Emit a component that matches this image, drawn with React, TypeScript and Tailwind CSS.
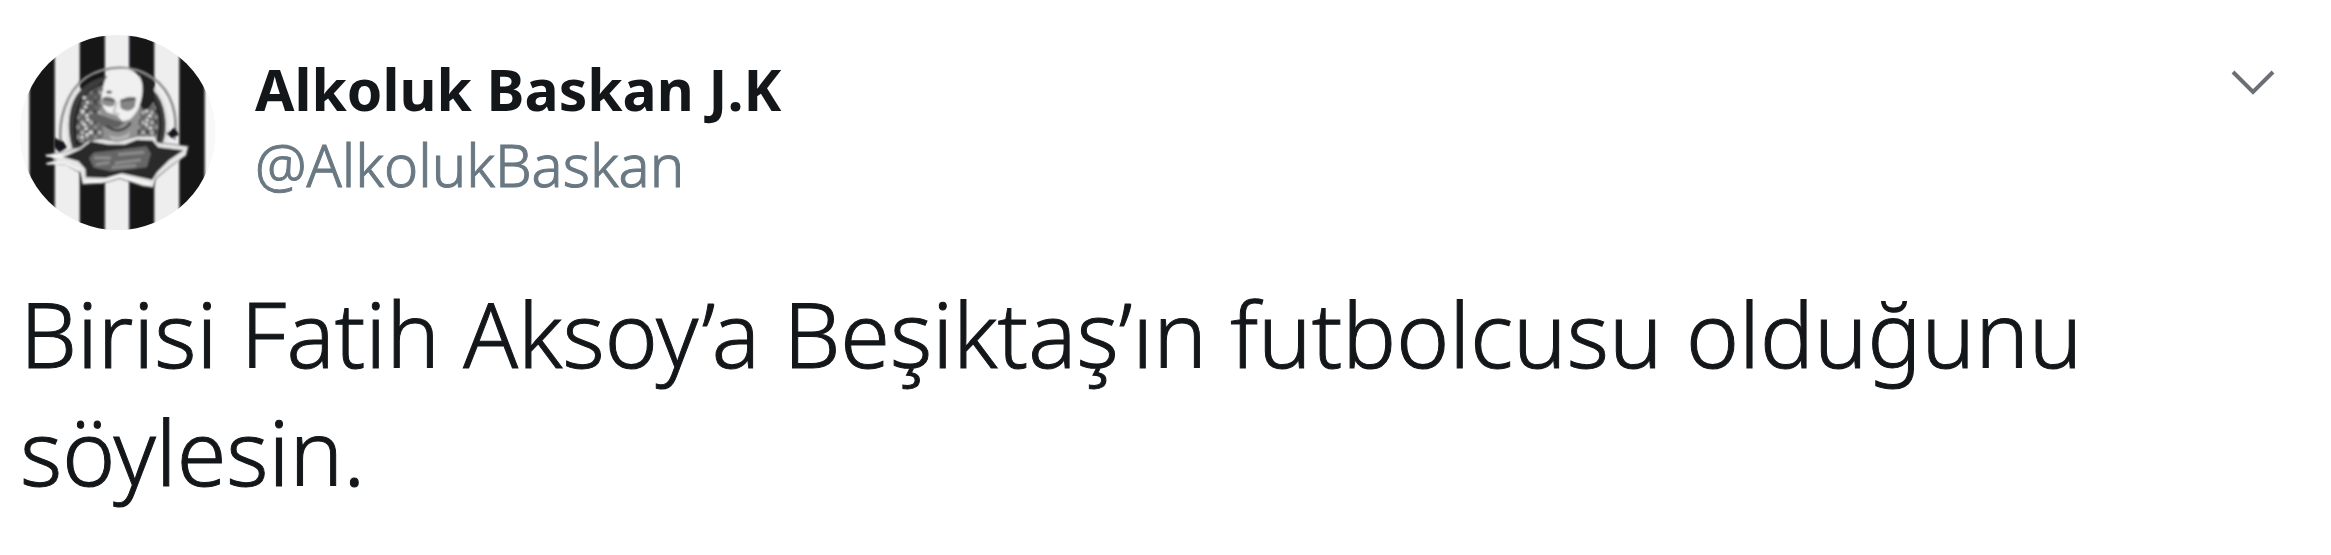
function Avatar() {
  return (
    <svg viewBox="28 46 584 584" className="size-[195px] shrink-0" role="img" aria-label="Alkoluk Baskan J.K">
      <defs>
        <clipPath id="disc">
          <circle cx="320" cy="338" r="292" />
        </clipPath>
        <filter id="soft" x="-5%" y="-5%" width="110%" height="110%">
          <feGaussianBlur stdDeviation="3" />
        </filter>
        <pattern id="grain" width="26" height="30" patternUnits="userSpaceOnUse">
          <rect width="26" height="30" fill="#686868" />
          <circle cx="7" cy="8" r="6" fill="#b4b4b4" />
          <circle cx="20" cy="22" r="5" fill="#9a9a9a" />
          <circle cx="19" cy="6" r="5" fill="#3a3a3a" />
        </pattern>
      </defs>
      <g clipPath="url(#disc)">
        <rect x="28" y="46" width="584" height="584" fill="#eeeeee" />
        <rect x="20" y="46" width="35" height="584" fill="#f8f8f9" />
        <rect x="583" y="46" width="35" height="584" fill="#f8f8f9" />
        <g fill="#141416" filter="url(#soft)">
          <rect x="56" y="30" width="76" height="620" />
          <rect x="207" y="30" width="75" height="620" />
          <rect x="355" y="30" width="75" height="620" />
          <rect x="505" y="30" width="76" height="620" />
        </g>
        <g filter="url(#soft)">
          <path d="M150 372C142 300 167 215 225 174C285 134 370 134 425 174C485 215 503 290 490 360" fill="none" stroke="#8f8f8f" strokeWidth="8" />
          <path d="M178 385C160 325 172 235 225 195C280 155 370 155 420 195C472 235 480 325 460 375Z" fill="#3d3d3d" />
          <path d="M178 385C160 325 165 245 207 205M430 205C472 245 480 325 460 375" fill="none" stroke="#e4e4e4" strokeWidth="12" />
          <path d="M198 372C185 320 195 250 235 213C280 178 370 178 408 213C448 250 455 315 440 362Z" fill="url(#grain)" stroke="#222" strokeWidth="8" />
          <path d="M388 160L430 185V245L405 275L380 250Z" fill="#222" />
          <path d="M262 190L215 215L205 260L245 280L270 250Z" fill="#444" opacity=".5" />
          <path d="M268 260L280 365C300 390 355 390 377 360L390 260Z" fill="#909090" />
          <path d="M277 208C280 165 305 148 340 148C376 148 398 174 395 214C393 244 382 282 355 300L335 304L318 286L290 278C273 262 266 238 277 208Z" fill="#f0f0f0" />
          <path d="M275 236C287 225 304 231 314 242L310 257C294 265 280 258 273 248Z" fill="#8c8c8c" />
          <path d="M327 245C338 232 360 228 376 234L372 260C362 276 341 276 329 264Z" fill="#858585" />
          <path d="M277 237L312 243M329 243L373 237" stroke="#555" strokeWidth="6" fill="none" />
          <ellipse cx="295" cy="217" rx="9" ry="5" fill="#666" />
          <path d="M318 246L309 278L326 285" stroke="#c4c4c4" strokeWidth="7" fill="none" />
          <path d="M225 288C250 273 276 290 305 298L340 307L322 323L285 324Z" fill="#606060" />
          <path d="M288 318C313 340 342 334 360 308" fill="none" stroke="#444" strokeWidth="8" />
          <path d="M294 344C313 355 340 352 358 334L350 368L306 372Z" fill="#b4b4b4" />
          <path d="M218 230L232 252L215 272L235 294L218 320L240 340M405 270L418 290L402 310L425 330M210 355L245 335M385 352L432 350" fill="none" stroke="#d8d8d8" strokeWidth="9" strokeDasharray="9 8" />
          <path d="M130 354L158 365L170 382L146 398L130 382ZM466 342L491 322L505 345L482 355Z" fill="#17171a" />
          <path d="M106 405L160 396L207 383L230 364L270 357L320 365L380 349L433 349L439 368L532 379L525 407L477 440L435 475L427 503L395 498L326 475L276 490L215 493L208 458L166 434L105 431L136 420Z" fill="#e6e6e6" stroke="#777" strokeWidth="3" />
          <path d="M158 411L208 389L240 364L292 374L342 374L378 360L425 362L442 382L518 391L474 421L439 456L424 480L387 472L333 460L285 474L225 472L224 448L203 424Z" fill="#29292b" />
          <path d="M235 414L249 398L324 390L407 379L420 402L408 442L358 448L300 454L248 443Z" fill="#666" />
          <path d="M250 414H300M322 404L400 397M255 434L296 428M312 430L390 420M303 443L376 437" stroke="#8c8c8c" strokeWidth="9" fill="none" />
          <path d="M106 408H155M108 432L162 430L205 450M220 486L276 484L325 468L418 493" stroke="#fff" strokeWidth="5" fill="none" />
        </g>
      </g>
    </svg>
  );
}

export default function App() {
  return (
    <article className="bg-white px-5 pt-[35px] pb-10 font-['Noto_Sans','Open_Sans',sans-serif] text-[#14171a]">
      <header className="flex items-start">
        <Avatar />
        <div className="ml-10 flex-1 pt-4">
          <h1 className="text-[57px] leading-[76px] font-bold">Alkoluk Baskan J.K</h1>
          <a href="#profile" className="block text-[58px] leading-[76px] font-light text-[#697882] [-webkit-text-stroke:1px_#697882]">@AlkolukBaskan</a>
        </div>
        <button type="button" aria-label="More" className="mt-[26px] mr-7 p-2">
          <svg viewBox="0 0 44 28" className="h-7 w-11" fill="none" stroke="#6c7074" strokeWidth="4">
            <path d="M2 3L22 23L42 3" />
          </svg>
        </button>
      </header>
      <p className="mt-11 text-[90px] leading-[118px] font-light [-webkit-text-stroke:1px_#14171a]">Birisi Fatih Aksoy’a Beşiktaş’ın futbolcusu olduğunu söylesin.</p>
    </article>
  );
}
